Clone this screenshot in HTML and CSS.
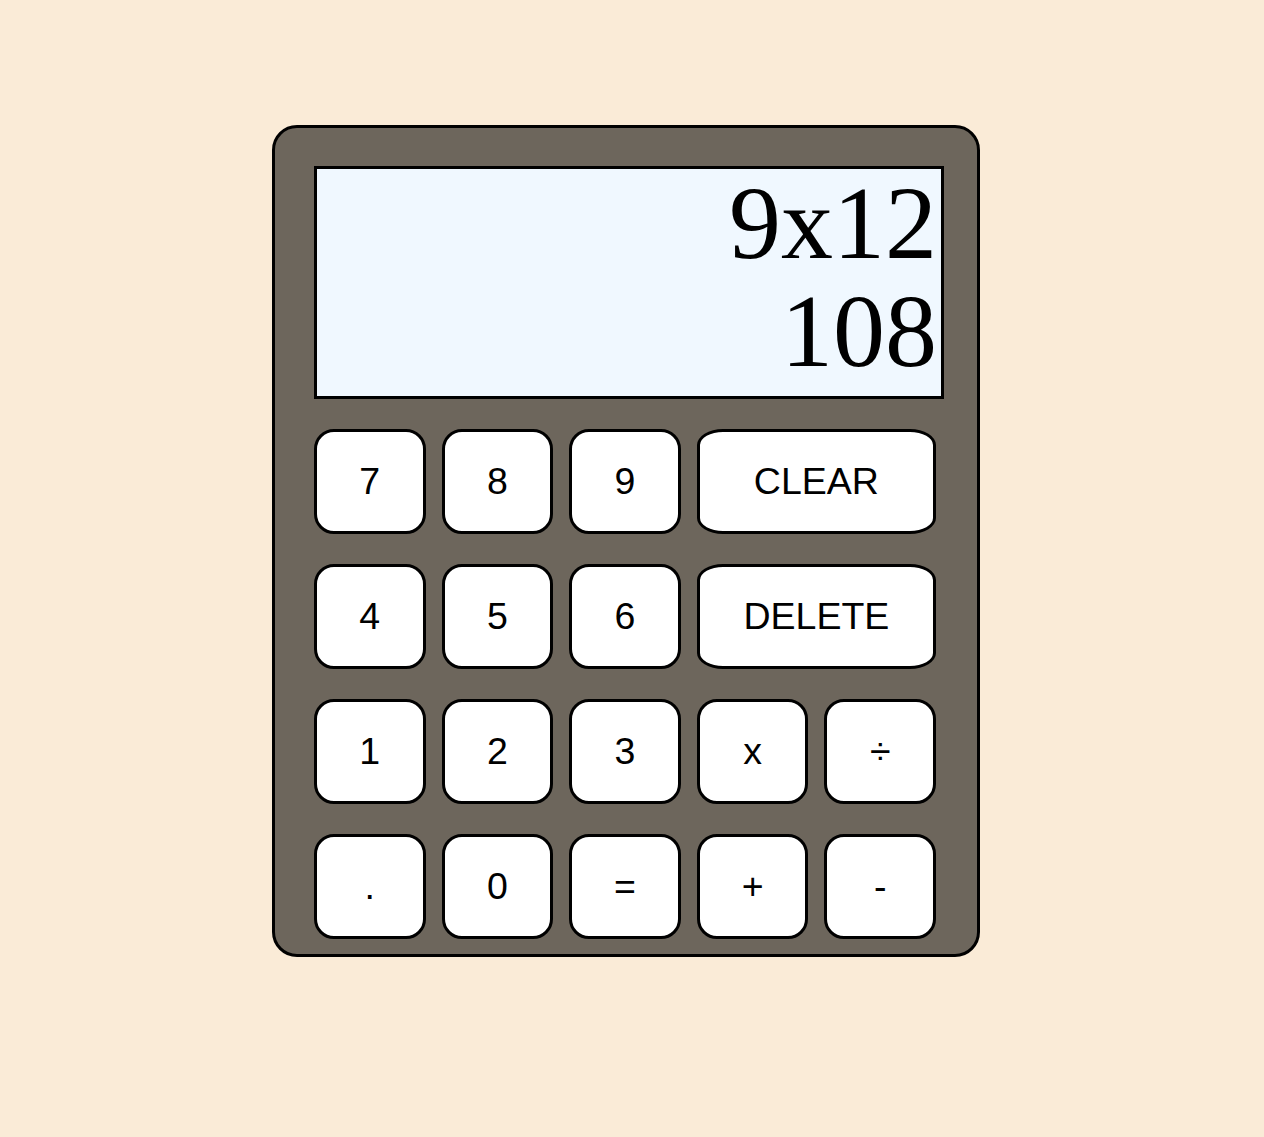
FILE: index.html
```html
<!DOCTYPE html>
<html lang="en">
<head>
<meta charset="utf-8">
<title>Calculator</title>
<link rel="stylesheet" href="styles.css">
</head>
<body>
<div class="page">
  <div class="calculator">
    <div class="display">
      <div class="line">9x12</div>
      <div class="line">108</div>
    </div>
    <div class="keys">
      <button class="key">7</button>
      <button class="key">8</button>
      <button class="key">9</button>
      <button class="key wide">CLEAR</button>
      <button class="key">4</button>
      <button class="key">5</button>
      <button class="key">6</button>
      <button class="key wide">DELETE</button>
      <button class="key">1</button>
      <button class="key">2</button>
      <button class="key">3</button>
      <button class="key">x</button>
      <button class="key">÷</button>
      <button class="key">.</button>
      <button class="key">0</button>
      <button class="key">=</button>
      <button class="key">+</button>
      <button class="key">-</button>
    </div>
  </div>
</div>
</body>
</html>
```

FILE: styles.css
```css
html, body {
  margin: 0;
  padding: 0;
  background: #faebd7;
}

.page {
  min-height: 1137px;
  padding: 125px 0 0 272px;
  box-sizing: border-box;
}

.calculator {
  width: 630px;
  border: 3px solid #000;
  border-radius: 25px;
  background: #6d665c;
  padding: 38px 33px 15px 39px;
}

.display {
  height: 227px;
  box-sizing: content-box;
  border: 3px solid #000;
  background: #f0f8ff;
  font-family: "Liberation Serif", "Times New Roman", serif;
  font-size: 104px;
  line-height: 108px;
  text-align: right;
  padding-right: 4px;
  color: #000;
}

.keys {
  margin-top: 30px;
  width: 622px;
  display: grid;
  grid-template-columns: repeat(5, 1fr);
  grid-auto-rows: 105px;
  column-gap: 16px;
  row-gap: 30px;
}

.key {
  margin: 0;
  padding: 0;
  background: #fff;
  color: #000;
  border: 3px solid #000;
  border-radius: 20px;
  font-family: "Liberation Sans", Arial, sans-serif;
  font-size: 37.5px;
  display: flex;
  align-items: center;
  justify-content: center;
}

.key.wide {
  grid-column: span 2;
  border-radius: 26px / 16px;
}
```
